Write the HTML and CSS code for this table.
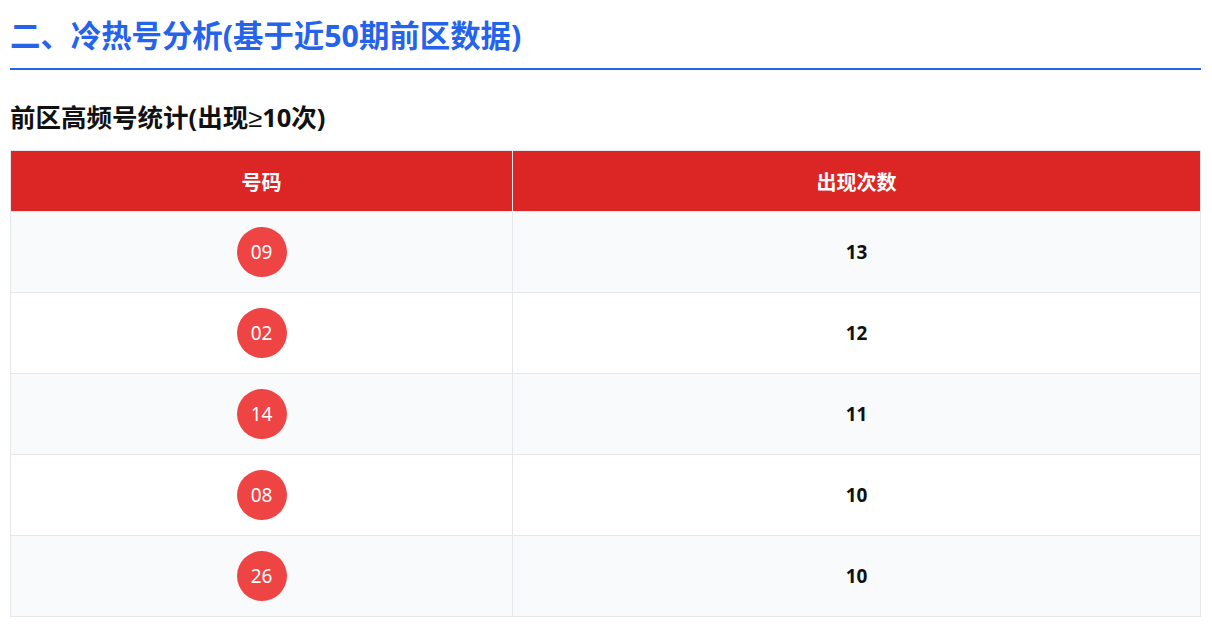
FILE: index.html
```html
<!DOCTYPE html>
<html lang="zh-CN">
<head>
<meta charset="utf-8">
<title>冷热号分析</title>
<link rel="stylesheet" href="styles.css">
</head>
<body>
<section class="section">
  <h2 class="section-title">二、冷热号分析(基于近50期前区数据)</h2>
  <h3 class="sub-title">前区高频号统计(出现<span class="sym">≥</span>10次)</h3>
  <table class="stat-table">
    <thead>
      <tr><th class="col-num">号码</th><th>出现次数</th></tr>
    </thead>
    <tbody>
      <tr><td><span class="ball">09</span></td><td class="count">13</td></tr>
      <tr><td><span class="ball">02</span></td><td class="count">12</td></tr>
      <tr><td><span class="ball">14</span></td><td class="count">11</td></tr>
      <tr><td><span class="ball">08</span></td><td class="count">10</td></tr>
      <tr><td><span class="ball">26</span></td><td class="count">10</td></tr>
    </tbody>
  </table>
</section>
</body>
</html>
```

FILE: styles.css
```css
* { box-sizing: border-box; }
html, body { margin: 0; padding: 0; background: #fff; }
body {
  font-family: "Noto Sans", "Noto Sans CJK SC", sans-serif;
  color: #111;
}
.section { padding: 0 11px 0 10px; }
.section-title {
  margin: 0;
  padding: 14px 0 10px;
  font-size: 30.4px;
  line-height: 44px;
  font-weight: 700;
  color: #2563eb;
  border-bottom: 2px solid #2563eb;
}
.sub-title {
  margin: 0;
  padding: 30px 0 16px;
  height: 80px;
  font-size: 25.5px;
  line-height: 34px;
  font-weight: 700;
  color: #111;
}
.sym { font-family: "Liberation Sans", sans-serif; font-weight: 400; line-height: 1; }
.stat-table {
  width: 100%;
  border-collapse: collapse;
  border: 1px solid #e5e7eb;
}
.stat-table th {
  background: #dc2626;
  color: #fff;
  font-size: 20px;
  font-weight: 700;
  height: 61px;
  padding: 0 15px;
  text-align: center;
  border: 1px solid #e5e7eb;
}
.stat-table th.col-num { width: 42.2%; }
.stat-table td {
  height: 81px;
  padding: 0 15px;
  text-align: center;
  border: 1px solid #e5e7eb;
  vertical-align: middle;
}
.stat-table tbody tr:nth-child(odd) td { background: #f9fafb; }
.count { font-size: 19px; font-weight: 700; color: #111; }
.ball {
  display: inline-flex;
  align-items: center;
  justify-content: center;
  width: 50px;
  height: 50px;
  border-radius: 50%;
  background: #ef4444;
  color: #fff;
  font-size: 19px;
  vertical-align: middle;
}
```
